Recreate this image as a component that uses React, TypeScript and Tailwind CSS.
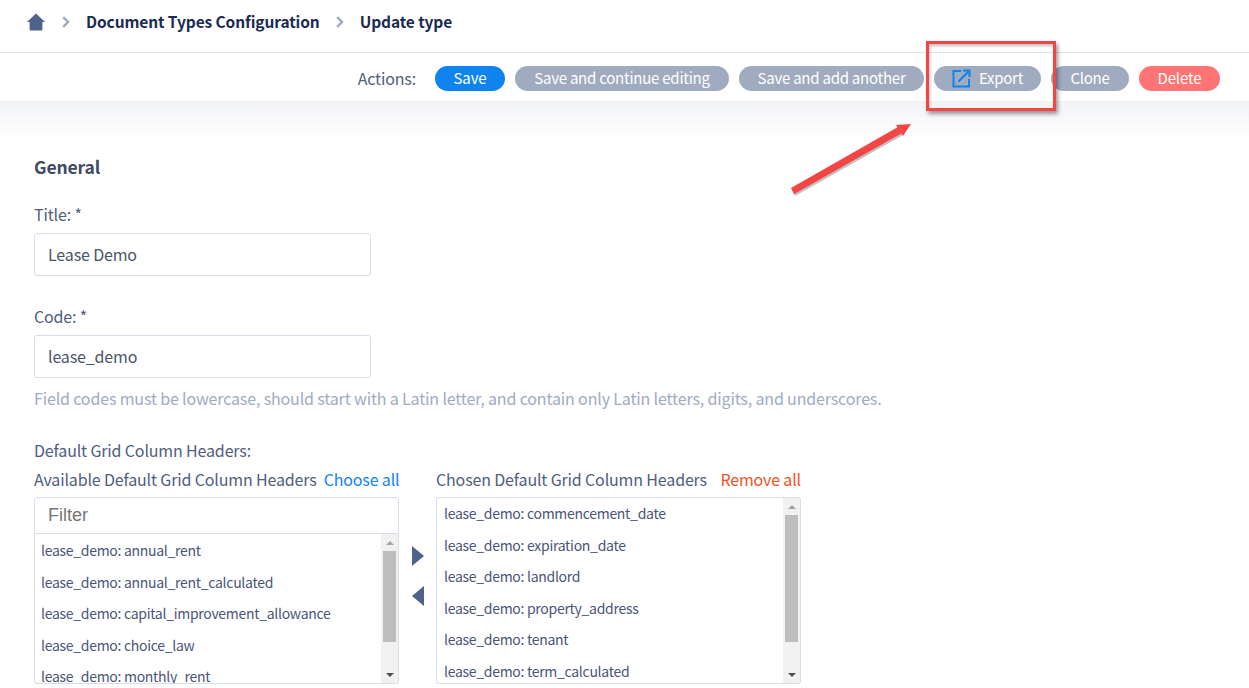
const available = ["annual_rent", "annual_rent_calculated", "capital_improvement_allowance", "choice_law", "monthly_rent"];
const chosen = ["commencement_date", "expiration_date", "landlord", "property_address", "tenant", "term_calculated"];

const FONT = "font-['Noto_Sans_CJK_SC','Source_Sans_Pro',sans-serif]";

const ListBox = ({ items, textClass, thumbClass }: { items: string[]; textClass: string; thumbClass: string }) => (
  <div className="flex h-full overflow-hidden">
    <div className={`flex-1 overflow-hidden text-[14px] tracking-[-0.29px] text-[#4a5578] ${textClass}`}>
      {items.map((item) => (
        <div key={item} className="flex h-[31.5px] items-center whitespace-nowrap">
          lease_demo: {item}
        </div>
      ))}
    </div>
    <div className="flex h-full w-[17px] flex-col bg-[#f1f1f1]">
      <div className="flex h-[17px] items-center justify-center">
        <div className="h-0 w-0 border-x-[4px] border-b-[4px] border-x-transparent border-b-[#a3a3a3]" />
      </div>
      <div className={`mx-[2px] bg-[#bdbdbd] ${thumbClass}`} />
      <div className="mt-auto flex h-[17px] items-center justify-center">
        <div className="h-0 w-0 border-x-[4px] border-t-[4px] border-x-transparent border-t-[#505050]" />
      </div>
    </div>
  </div>
);

const GrayButton = ({ className, children }: { className: string; children: React.ReactNode }) => (
  <button className={`flex h-[25px] items-center justify-center rounded-full bg-[#a0abc0] text-[15px] tracking-[-0.24px] text-white ${className}`}>
    {children}
  </button>
);

const Crumb = () => (
  <svg viewBox="0 0 8 12" className="h-[12px] w-[8px]" fill="none" stroke="#a0abc0" strokeWidth="2.4">
    <path d="M1.2 1.2 6 6l-4.8 4.8" />
  </svg>
);

export default function App() {
  return (
    <div className={`relative h-[688px] w-[1249px] overflow-hidden bg-white ${FONT} text-[16px] tracking-[-0.15px] text-[#4a5568]`}>
      <header className="flex h-[53px] items-center border-b border-[#dde2ec] pb-[9px] pl-[27px]">
        <svg viewBox="0 0 18 18" className="h-[18px] w-[18px]" fill="#4f628a">
          <path d="M9 .5 18 9h-2.6v7.6c0 .6-.4 1-1 1H3.6c-.6 0-1-.4-1-1V9H0Z" />
        </svg>
        <div className="ml-[17px]">
          <Crumb />
        </div>
        <span className="ml-[16px] text-[15.5px] font-semibold tracking-[-0.1px] text-[#1a2c51]">Document Types Configuration</span>
        <div className="ml-[16px]">
          <Crumb />
        </div>
        <span className="ml-[16px] text-[15.5px] font-semibold tracking-[-0.1px] text-[#1a2c51]">Update type</span>
      </header>

      <div className="flex h-[48px] items-center justify-end gap-[10px] pr-[29px] pt-[3px]">
        <span className="mr-[9px] pb-[2px] text-[#4f5d7e]">Actions:</span>
        <button className="flex h-[25px] w-[70px] items-center justify-center rounded-full bg-[#0f83ee] text-[15px] tracking-[-0.1px] text-white">Save</button>
        <GrayButton className="w-[214px]">Save and continue editing</GrayButton>
        <GrayButton className="w-[185px]">Save and add another</GrayButton>
        <GrayButton className="w-[107px]">
          <svg viewBox="0 0 19 19" className="mr-[8px] h-[19px] w-[19px]" fill="none" stroke="#0f83ee" strokeWidth="2">
            <path d="M9 2H1.5v15.5H17V10" />
            <path d="M6.5 12.5 17 2M11 1.5h6.5V8" />
          </svg>
          Export
        </GrayButton>
        <GrayButton className="w-[78px]">Clone</GrayButton>
        <button className="flex h-[25px] w-[81px] items-center justify-center rounded-full bg-[#ff7474] text-[15px] tracking-[-0.1px] text-white">Delete</button>
      </div>

      <div className="h-[40px] bg-gradient-to-b from-[#f2f3f6] to-white" />

      <main className="pl-[34px]">
        <h2 className="mt-[14px] text-[17.5px] font-semibold leading-[24px] text-[#3f4a63]">General</h2>

        <label className="mt-[25px] block leading-[20px] text-[#4f5d7e]">Title: *</label>
        <div className="mt-[9px] flex h-[43px] w-[337px] items-center rounded-[3px] border border-[#d9dde8] pb-[2px] pl-[13px] text-[#4a5568]">Lease Demo</div>

        <label className="mt-[30px] block leading-[20px] text-[#4f5d7e]">Code: *</label>
        <div className="mt-[9px] flex h-[43px] w-[337px] items-center rounded-[3px] border border-[#d9dde8] pb-[2px] pl-[13px] text-[#4a5568]">lease_demo</div>
        <p className="mt-[8px] leading-[24px] text-[#a0abc0]">
          Field codes must be lowercase, should start with a Latin letter, and contain only Latin letters, digits, and underscores.
        </p>

        <div className="mt-[28px] leading-[24px] text-[#4f5d7e]">Default Grid Column Headers:</div>

        <div className="mt-[5px] flex">
          <div className="w-[365px]">
            <div className="flex h-[24px] items-center whitespace-nowrap text-[#4f5d7e]">
              Available Default Grid Column Headers
              <span className="ml-[7px] text-[#0f83ee]">Choose all</span>
            </div>
            <div className="mt-[6px] flex h-[37px] items-center rounded-t-[3px] border border-[#d9dde8] pl-[13px] font-['Liberation_Sans',sans-serif] text-[18px] tracking-normal text-[#757575]">Filter</div>
            <div className="h-[150px] rounded-b-[3px] border border-t-0 border-[#d9dde8]">
              <ListBox items={available} textClass="pl-[6px] pt-[1px]" thumbClass="h-[91px]" />
            </div>
          </div>

          <div className="flex w-[37px] flex-col items-center pt-[79px]">
            <div className="h-0 w-0 border-y-[10px] border-l-[12px] border-y-transparent border-l-[#4f628a]" />
            <div className="ml-[1px] mt-[20px] h-0 w-0 border-y-[10px] border-r-[12px] border-y-transparent border-r-[#4f628a]" />
          </div>

          <div className="w-[365px]">
            <div className="flex h-[24px] items-center justify-between whitespace-nowrap text-[#4f5d7e]">
              Chosen Default Grid Column Headers
              <span className="text-[#f4511e]">Remove all</span>
            </div>
            <div className="mt-[6px] h-[187px] rounded-[3px] border border-[#d9dde8]">
              <ListBox items={chosen} textClass="pl-[7px]" thumbClass="h-[127px]" />
            </div>
          </div>
        </div>
      </main>

      {/* annotation overlay */}
      <div className="absolute left-[926px] top-[41px] h-[70px] w-[130px] border-[3px] border-[#f44545] shadow-[2px_3px_4px_rgba(0,0,0,0.4),inset_1px_2px_3px_rgba(0,0,0,0.25)]" />
      <svg className="absolute left-[785px] top-[115px] h-[85px] w-[135px]" viewBox="0 0 135 85" fill="none">
        <path d="M6 73 9 79 117 18 113 12Z" fill="rgba(0,0,0,0.25)" transform="translate(1 2)" />
        <path d="M6 73 9 79 117 18 113 12Z" fill="#f44545" />
        <path d="M126 9 111 10 118 21Z" fill="#f44545" />
      </svg>
    </div>
  );
}
